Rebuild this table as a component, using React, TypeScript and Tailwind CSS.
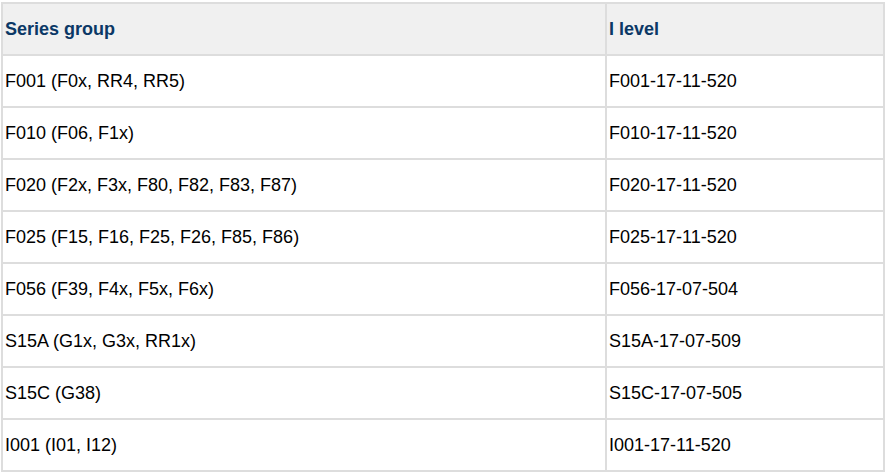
const rows: [string, string][] = [
  ["F001 (F0x, RR4, RR5)", "F001-17-11-520"],
  ["F010 (F06, F1x)", "F010-17-11-520"],
  ["F020 (F2x, F3x, F80, F82, F83, F87)", "F020-17-11-520"],
  ["F025 (F15, F16, F25, F26, F85, F86)", "F025-17-11-520"],
  ["F056 (F39, F4x, F5x, F6x)", "F056-17-07-504"],
  ["S15A (G1x, G3x, RR1x)", "S15A-17-07-509"],
  ["S15C (G38)", "S15C-17-07-505"],
  ["I001 (I01, I12)", "I001-17-11-520"],
]

export default function App() {
  return (
    <div className="bg-white pt-[2px] pl-[1px] font-['Liberation_Sans',Arial,sans-serif] text-[18px]">
      <table className="w-[884px] border-collapse">
        <thead>
          <tr className="h-[52px] bg-[#f0f0f0]">
            <th className="border-2 border-[#dddddd] px-[2px] text-left font-bold text-[#0b3866] w-[604px]">
              Series group
            </th>
            <th className="border-2 border-[#dddddd] px-[2px] text-left font-bold text-[#0b3866]">
              I level
            </th>
          </tr>
        </thead>
        <tbody>
          {rows.map(([group, level]) => (
            <tr key={level} className="h-[52px]">
              <td className="border-2 border-[#dddddd] px-[2px] pt-[1px] text-black">{group}</td>
              <td className="border-2 border-[#dddddd] px-[2px] pt-[1px] text-black">{level}</td>
            </tr>
          ))}
        </tbody>
      </table>
    </div>
  )
}
